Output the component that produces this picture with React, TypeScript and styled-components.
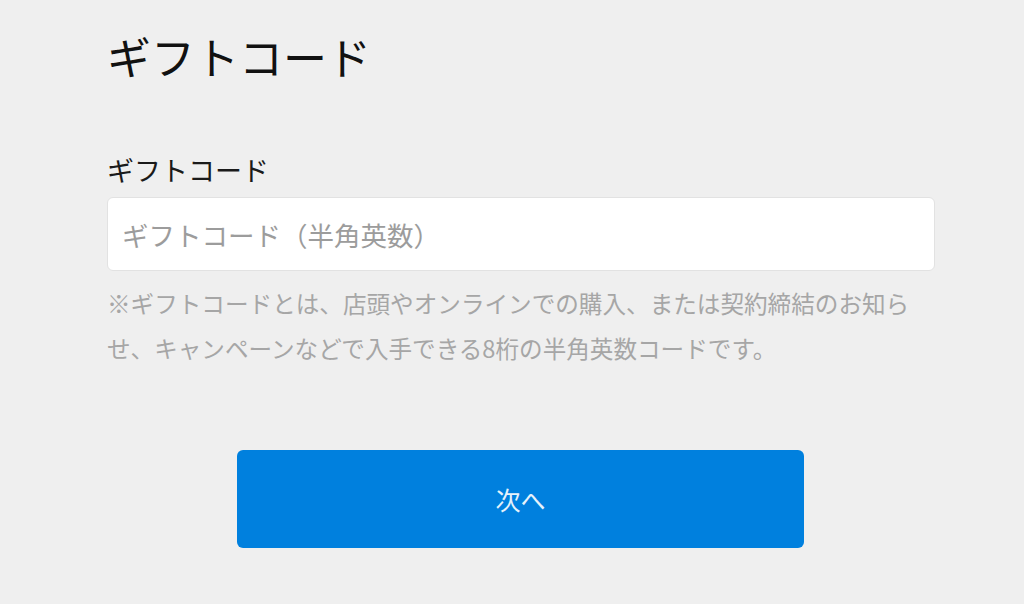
import React from "react";
import styled, { createGlobalStyle } from "styled-components";

const Global = createGlobalStyle`
  html, body { margin: 0; padding: 0; background: #efefef; }
  body { font-family: "Noto Sans CJK JP", "Noto Sans", sans-serif; }
`;

const Page = styled.div`
  width: 1024px;
  height: 604px;
  box-sizing: border-box;
  padding: 25px 90px 0 107px;
  display: flex;
  flex-direction: column;
  overflow: hidden;
`;

const Title = styled.h1`
  margin: 0;
  font-size: 44px;
  font-weight: 400;
  line-height: 62px;
  color: #111;
`;

const Label = styled.label`
  margin-top: 65px;
  font-size: 27px;
  line-height: 36px;
  color: #1a1a1a;
`;

const Input = styled.input`
  margin-top: 9px;
  width: 828px;
  height: 74px;
  box-sizing: border-box;
  border: 1.5px solid #e2e2e2;
  border-radius: 6px;
  background: #fff;
  padding: 0 14px;
  font-family: inherit;
  font-size: 26.5px;
  color: #222;
  outline: none;
  &::placeholder { color: #9c9c9c; }
`;

const Help = styled.p`
  margin: 10px 0 0;
  width: 826px;
  font-size: 23.6px;
  line-height: 45px;
  color: #a6a6a6;
`;

const ButtonRow = styled.div`
  margin-top: 79px;
  display: flex;
  padding-left: 130px;
`;

const Button = styled.button`
  width: 567px;
  height: 98px;
  border: none;
  border-radius: 6px;
  background: #0080de;
  color: #e6f2fb;
  font-family: inherit;
  font-size: 25px;
  cursor: pointer;
`;

export default function App() {
  return (
    <>
      <Global />
      <Page>
        <Title>ギフトコード</Title>
        <Label htmlFor="code">ギフトコード</Label>
        <Input id="code" placeholder="ギフトコード（半角英数）" />
        <Help>
          ※ギフトコードとは、店頭やオンラインでの購入、または契約締結のお知らせ、キャンペーンなどで入手できる8桁の半角英数コードです。
        </Help>
        <ButtonRow>
          <Button>次へ</Button>
        </ButtonRow>
      </Page>
    </>
  );
}
